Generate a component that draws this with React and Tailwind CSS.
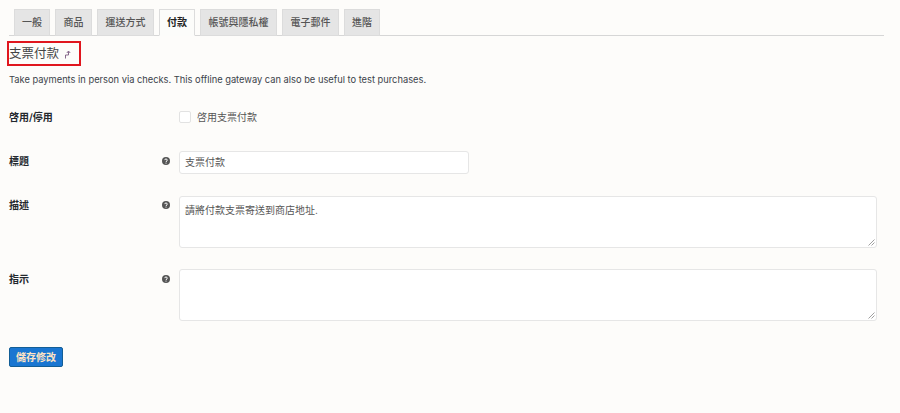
const CJK = '"Inter","Noto Sans CJK TC",sans-serif';

const tabs = [
  ["一般", "w-[36px]", false],
  ["商品", "w-[37px]", false],
  ["運送方式", "w-[57px]", false],
  ["付款", "w-[36px]", true],
  ["帳號與隱私權", "w-[77px]", false],
  ["電子郵件", "w-[57px]", false],
  ["進階", "w-[36px]", false],
];

function Help() {
  return (
    <svg width="8" height="8" viewBox="0 0 8 8" className="block">
      <circle cx="4" cy="4" r="4" fill="#555" />
      <path d="M2.7 3.1 C2.7 1.6 5.3 1.6 5.3 3.1 C5.3 4 4 4 4 5" fill="none" stroke="#fff" strokeWidth="1" />
      <rect x="3.5" y="5.6" width="1" height="1" fill="#fff" />
    </svg>
  );
}

function Row({ label, help, className, children }) {
  return (
    <div className={"flex " + className}>
      <div className="w-[153px] shrink-0 text-[10px] leading-[14px] font-semibold text-[#23282d]">{label}</div>
      <div className="w-[17px] shrink-0 pt-[3px]">{help && <Help />}</div>
      <div className="flex-1 min-w-0">{children}</div>
    </div>
  );
}

function Area({ children }) {
  return (
    <div className="relative w-[698px] h-[52px] bg-white border border-[#e6e6e6] rounded-[3px] px-[5px] py-[6px] text-[10px] leading-[14px] text-[#555]">
      {children}
      <svg width="7" height="7" viewBox="0 0 7 7" className="absolute right-[1px] bottom-[1px]">
        <path d="M0.5 6.5 L6.5 0.5 M3.5 6.5 L6.5 3.5" stroke="#888" strokeWidth="0.8" fill="none" />
      </svg>
    </div>
  );
}

export default function App() {
  return (
    <div className="w-[900px] h-[413px] bg-[#fdfcfa] overflow-hidden pl-[9px] pt-[9px]" style={{ fontFamily: CJK }}>
      <div className="flex w-[875px] gap-[5px] pl-[5px] h-[27px] border-b border-[#d6d6d6]">
        {tabs.map(([t, w, active]) => (
          <div
            key={t}
            className={
              "h-[27px] flex items-center justify-center text-[10px] border border-[#dcdcdc] " + w + " " +
              (active ? "bg-[#fcfcfa] text-[#222] font-semibold border-b-[#fcfcfa]" : "bg-[#e5e5e5] text-[#555] font-medium")
            }
          >
            {t}
          </div>
        ))}
      </div>

      <div className="-ml-[2px] mt-[5px] w-[74px] h-[25px] border-2 border-[#e0161e] flex items-center pt-[1px]">
        <span className="text-[12.5px] leading-none text-[#444]">支票付款</span>
        <svg width="7" height="9" viewBox="0 0 7 9" className="ml-[5px] mt-[1px]">
          <path d="M1.5 8.5 V5 H4.5 V1.5 M2.8 3 L4.5 1 L6.2 3" fill="none" stroke="#7a5a80" strokeWidth="0.9" />
        </svg>
      </div>

      <p className="mt-[7px] text-[9.3px] leading-[14px] text-[#3c434a]">
        Take payments in person via checks. This offline gateway can also be useful to test purchases.
      </p>

      <Row label="啓用/停用" className="mt-[23px] h-[14px]">
        <label className="flex items-center h-[14px] text-[10px] text-[#555]">
          <span className="w-[12px] h-[12px] bg-white border border-[#e2e2e2] rounded-[2px]"></span>
          <span className="ml-[6px]">啓用支票付款</span>
        </label>
      </Row>

      <Row label="標題" help className="mt-[30px]">
        <div className="w-[290px] h-[23px] -mt-[3px] bg-white border border-[#e6e6e6] rounded-[3px] px-[5px] flex items-center text-[10px] text-[#555]">
          支票付款
        </div>
      </Row>

      <Row label="描述" help className="mt-[24px]">
        <div className="-mt-[2px]"><Area>請將付款支票寄送到商店地址.</Area></div>
      </Row>

      <Row label="指示" help className="mt-[24px]">
        <div className="-mt-[3px]"><Area /></div>
      </Row>

      <button className="mt-[26px] w-[54px] h-[20px] bg-[#1a76d1] border border-[#135e96] rounded-[2px] text-[10px] font-semibold text-[#fde3c4] flex items-center justify-center">
        儲存修改
      </button>
    </div>
  );
}
